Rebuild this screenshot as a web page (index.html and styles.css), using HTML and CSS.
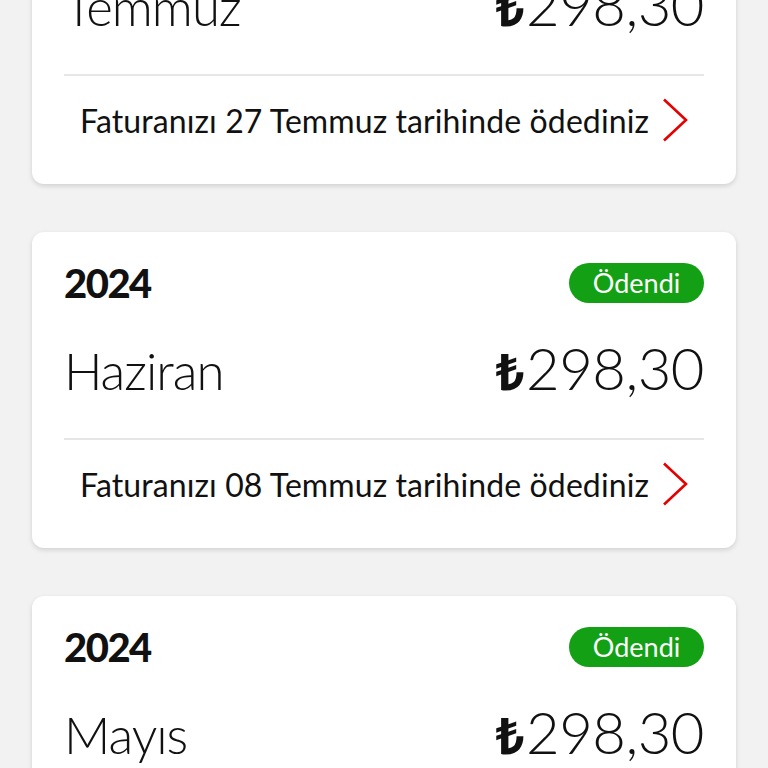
FILE: index.html
```html
<!DOCTYPE html>
<html lang="tr">
<head>
    <meta charset="UTF-8">
    <meta name="viewport" content="width=device-width, initial-scale=1.0">
    <title>Faturalarım</title>
    <link rel="stylesheet" href="styles.css">
</head>
<body>
    <div class="bill-list">
        <div class="card">
            <div class="card-head">
                <span class="year">2024</span>
                <span class="badge">Ödendi</span>
            </div>
            <div class="card-main">
                <span class="month">Temmuz</span>
                <span class="price"><span class="lira">₺</span>298,30</span>
            </div>
            <div class="card-foot">
                <span class="paid-text">Faturanızı 27 Temmuz tarihinde ödediniz</span>
                <svg class="chevron" width="26" height="44" viewBox="0 0 26 44"><path d="M2 1.5 L24 22 L2 42.5" fill="none" stroke="#e60000" stroke-width="2.6"/></svg>
            </div>
        </div>

        <div class="card">
            <div class="card-head">
                <span class="year">2024</span>
                <span class="badge">Ödendi</span>
            </div>
            <div class="card-main">
                <span class="month">Haziran</span>
                <span class="price"><span class="lira">₺</span>298,30</span>
            </div>
            <div class="card-foot">
                <span class="paid-text">Faturanızı 08 Temmuz tarihinde ödediniz</span>
                <svg class="chevron" width="26" height="44" viewBox="0 0 26 44"><path d="M2 1.5 L24 22 L2 42.5" fill="none" stroke="#e60000" stroke-width="2.6"/></svg>
            </div>
        </div>

        <div class="card">
            <div class="card-head">
                <span class="year">2024</span>
                <span class="badge">Ödendi</span>
            </div>
            <div class="card-main">
                <span class="month">Mayıs</span>
                <span class="price"><span class="lira">₺</span>298,30</span>
            </div>
            <div class="card-foot">
                <span class="paid-text">Faturanızı 10 Haziran tarihinde ödediniz</span>
                <svg class="chevron" width="26" height="44" viewBox="0 0 26 44"><path d="M2 1.5 L24 22 L2 42.5" fill="none" stroke="#e60000" stroke-width="2.6"/></svg>
            </div>
        </div>
    </div>
</body>
</html>
```

FILE: styles.css
```css
body {
    margin: 0;
    padding: 0;
    background-color: #f2f2f2;
    font-family: Lato, "Noto Sans", sans-serif;
    color: #111;
    overflow: hidden;
}
.bill-list {
    display: flex;
    flex-direction: column;
    gap: 48px;
    padding: 0 32px;
    margin-top: -132px;
}
.card {
    background: #fff;
    border-radius: 12px;
    box-shadow: 0 2px 5px rgba(0, 0, 0, 0.14);
    height: 316px;
    padding: 0 32px;
    box-sizing: border-box;
}
.card-head {
    display: flex;
    justify-content: space-between;
    align-items: center;
    height: 40px;
    padding-top: 31px;
}
.year {
    font-weight: 900;
    font-size: 40px;
    letter-spacing: -1.5px;
    line-height: 40px;
}
.badge {
    background: #14a014;
    color: #fff;
    font-size: 27px;
    font-weight: 400;
    line-height: 40px;
    height: 40px;
    width: 135px;
    text-align: center;
    border-radius: 20px;
}
.card-main {
    display: flex;
    justify-content: space-between;
    align-items: baseline;
    height: 135px;
    border-bottom: 2px solid #e6e6e6;
}
.month {
    font-weight: 300;
    font-size: 51px;
    letter-spacing: -1px;
    line-height: 130px;
}
.price {
    font-weight: 300;
    font-size: 58px;
    letter-spacing: -0.5px;
    line-height: 130px;
}
.lira {
    font-family: "Noto Sans", sans-serif;
    font-weight: 700;
    font-size: 50px;
    margin-right: 2px;
}
.card-foot {
    display: flex;
    justify-content: space-between;
    align-items: center;
    padding: 22px 16px 0;
}
.paid-text {
    font-size: 32px;
    font-weight: 400;
    letter-spacing: 0.1px;
}
.chevron {
    display: block;
}
```
